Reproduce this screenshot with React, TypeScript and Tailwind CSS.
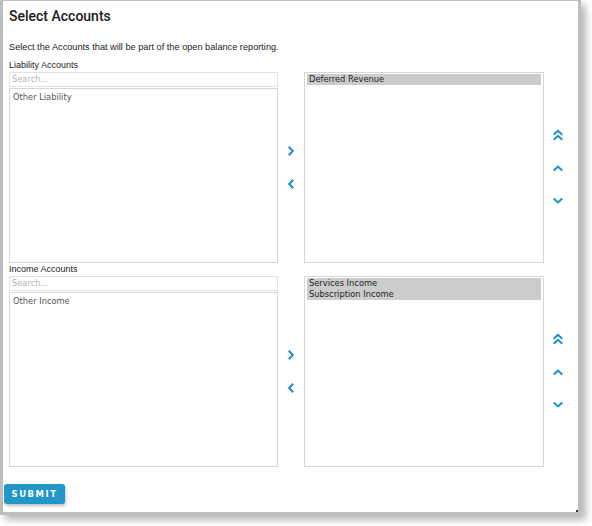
import React from "react";

const BLUE = "#1b8fc9";

function Chevron({ dir }: { dir: "right" | "left" | "up" | "down" | "dup" }) {
  const common = {
    fill: "none",
    stroke: BLUE,
    strokeWidth: 2,
    strokeLinecap: "square" as const,
    strokeLinejoin: "miter" as const,
  };
  if (dir === "right")
    return (
      <svg width="8" height="10" viewBox="0 0 8 10">
        <path d="M2.5 1.5 L5.8 5 L2.5 8.5" {...common} />
      </svg>
    );
  if (dir === "left")
    return (
      <svg width="8" height="10" viewBox="0 0 8 10">
        <path d="M5.5 1.5 L2.2 5 L5.5 8.5" {...common} />
      </svg>
    );
  if (dir === "up")
    return (
      <svg width="10" height="8" viewBox="0 0 10 8">
        <path d="M1.5 5.8 L5 2.5 L8.5 5.8" {...common} />
      </svg>
    );
  if (dir === "down")
    return (
      <svg width="10" height="8" viewBox="0 0 10 8">
        <path d="M1.5 2.2 L5 5.5 L8.5 2.2" {...common} />
      </svg>
    );
  return (
    <svg width="10" height="12" viewBox="0 0 10 12">
      <path d="M1.5 5 L5 1.8 L8.5 5" {...common} />
      <path d="M1.5 10 L5 6.8 L8.5 10" {...common} />
    </svg>
  );
}

function Section({
  label,
  available,
  selected,
}: {
  label: string;
  available: string[];
  selected: string[];
}) {
  return (
    <div className="flex items-end">
      <div className="flex w-[269px] flex-col">
        <div className="h-[11px] text-[9px] leading-[11px] text-[#222] [font-family:'Liberation_Sans',Arial,sans-serif]">
          {label}
        </div>
        <div className="mt-px flex h-[15px] items-center border border-[#e2e2e2] px-[2px] text-[8.3px] text-[#b3b3b3] [font-family:'DejaVu_Sans',Verdana,sans-serif]">
          Search...
        </div>
        <div className="mt-px h-[175px] border border-[#d6d6d6] px-[3px] pt-[3px] text-[8.3px] leading-[11px] text-[#555] [font-family:'DejaVu_Sans',Verdana,sans-serif]">
          {available.map((a) => (
            <div key={a}>{a}</div>
          ))}
        </div>
      </div>
      <div className="flex h-[191px] w-[26px] flex-col items-center justify-center gap-[23px]">
        <Chevron dir="right" />
        <Chevron dir="left" />
      </div>
      <div className="h-[191px] w-[240px] border border-[#d6d6d6] px-[2px] pt-px text-[8.3px] leading-[11px] text-[#222] [font-family:'DejaVu_Sans',Verdana,sans-serif]">
        {selected.map((s) => (
          <div key={s} className="bg-[#cccccc] pl-[2px]">
            {s}
          </div>
        ))}
      </div>
      <div className="flex h-[191px] w-[27px] flex-col items-center justify-center gap-[23px] pb-px">
        <Chevron dir="dup" />
        <Chevron dir="up" />
        <div className="mt-[2px] flex">
          <Chevron dir="down" />
        </div>
      </div>
    </div>
  );
}

export default function App() {
  return (
    <div className="h-[526px] w-[592px] overflow-hidden bg-white">
      <div className="relative flex h-[515px] w-[581px] flex-col border-t border-r-[3px] border-b-[3px] border-l-[3px] border-[#bcc0c2] bg-white shadow-[5px_5px_7px_rgba(0,0,0,0.28)]">
        <div className="flex flex-col pl-[6px]">
          <div className="mt-[7px] h-[17px] text-[14px] font-medium leading-[17px] text-[#1a1a1a] [font-family:Roboto,'Liberation_Sans',sans-serif]">
            Select Accounts
          </div>
          <div className="mt-[17px] h-[11px] text-[9.2px] leading-[11px] text-[#222] [font-family:'Liberation_Sans',Arial,sans-serif]">
            Select the Accounts that will be part of the open balance reporting.
          </div>
          <div className="mt-[7px]">
            <Section
              label="Liability Accounts"
              available={["Other Liability"]}
              selected={["Deferred Revenue"]}
            />
          </div>
          <div className="mt-px">
            <Section
              label="Income Accounts"
              available={["Other Income"]}
              selected={["Services Income", "Subscription Income"]}
            />
          </div>
        </div>
        <div className="mt-[17px] pl-px">
          <button className="flex h-[20px] w-[61px] items-center justify-center rounded-[3px] bg-[#2196c8] text-[8.5px] font-bold tracking-[1.5px] text-white shadow-[1px_2px_3px_rgba(0,0,0,0.25)] [font-family:'DejaVu_Sans',Verdana,sans-serif]">
            SUBMIT
          </button>
        </div>
        <div className="absolute right-0 bottom-0 h-[2px] w-[2px] bg-[#333]" />
      </div>
    </div>
  );
}
